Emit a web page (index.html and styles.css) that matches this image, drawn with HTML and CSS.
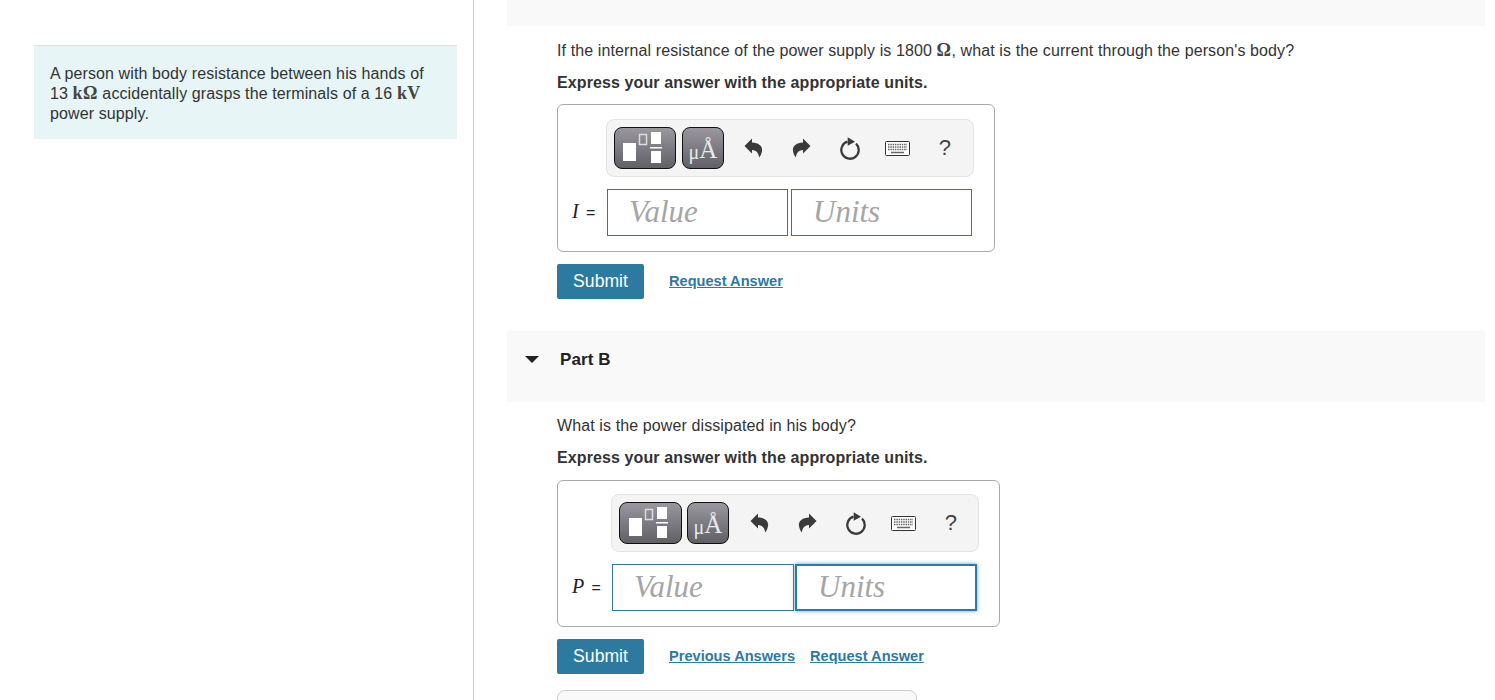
FILE: index.html
```html
<!DOCTYPE html>
<html lang="en">
<head>
    <meta charset="UTF-8">
    <title>Part B</title>
    <link rel="stylesheet" href="styles.css">
</head>
<body>
    <aside class="left-col">
        <div class="intro">
            A person with body resistance between his hands of<br>
            13 <span class="math">kΩ</span> accidentally grasps the terminals of a 16 <span class="math">kV</span><br>
            power supply.
        </div>
    </aside>

    <main class="right-col">
        <div class="part-band part-band-top"></div>
        <section class="part-body">
            <p class="question">If the internal resistance of the power supply is 1800 <span class="math">Ω</span>, what is the current through the person's body?</p>
            <p class="express">Express your answer with the appropriate units.</p>

            <div class="answer">
                <div class="toolbar">
                    <div class="tool-btn tool-btn-frac">
                        <svg width="60" height="40" viewBox="0 0 60 40"><rect x="8" y="15" width="13" height="18" fill="#fff"/><rect x="24.5" y="6.5" width="7" height="10" fill="none" stroke="#ddd" stroke-width="1.5"/><rect x="36" y="4" width="10" height="12" fill="#fff"/><rect x="35" y="19" width="12" height="1.5" fill="#fff"/><rect x="36" y="23" width="10" height="12" fill="#fff"/></svg>
                    </div>
                    <div class="tool-btn tool-btn-unit"><span class="mu">μ</span>Å</div>
                    <div class="tool-icon"><svg class="undo" width="20" height="22" viewBox="0 0 20 22"><path d="M1.5 9 L9 1.5 V5.5 C15 5.5 20 9 19 14 C18.7 16.5 17.5 19 16 20.5 C16 16 13 13 9 13 V16.5 Z" fill="#3a3a3a"/></svg></div>
                    <div class="tool-icon"><svg class="flip" width="20" height="22" viewBox="0 0 20 22"><path d="M1.5 9 L9 1.5 V5.5 C15 5.5 20 9 19 14 C18.7 16.5 17.5 19 16 20.5 C16 16 13 13 9 13 V16.5 Z" fill="#3a3a3a"/></svg></div>
                    <div class="tool-icon"><svg width="22" height="24" viewBox="0 0 22 24"><path d="M8.5 5.7 A8.7 8.7 0 1 0 17 7.7" fill="none" stroke="#3a3a3a" stroke-width="2.3"/><path d="M8.7 1.3 L16 5.7 L8.7 9.7 Z" fill="#3a3a3a"/></svg></div>
                    <div class="tool-icon"><svg class="keys" width="25" height="15" viewBox="0 0 25 15"><rect x="0.5" y="0.5" width="24" height="14" rx="1" fill="#fff" stroke="#333"/><path d="M3 3.5 H22 M3 6 H22 M3 8.5 H22" stroke="#666" stroke-width="1.5" stroke-dasharray="1.5 0.8"/><path d="M6 11.5 H19" stroke="#666" stroke-width="1.5"/></svg></div>
                    <div class="tool-icon tool-help">?</div>
                </div>
                <div class="answer-row">
                    <label class="var-label"><i>I</i> <span class="eq">=</span></label>
                    <input class="box-input" placeholder="Value">
                    <input class="box-input box-units" placeholder="Units">
                </div>
            </div>

            <div class="actions">
                <button class="submit">Submit</button>
                <a class="action-link" href="#">Request Answer</a>
            </div>
        </section>

        <div class="part-band">
            <span class="caret"></span>
            <h2 class="part-title">Part B</h2>
        </div>
        <section class="part-body part-body-b">
            <p class="question">What is the power dissipated in his body?</p>
            <p class="express">Express your answer with the appropriate units.</p>

            <div class="answer answer-b">
                <div class="toolbar">
                    <div class="tool-btn tool-btn-frac">
                        <svg width="60" height="40" viewBox="0 0 60 40"><rect x="8" y="15" width="13" height="18" fill="#fff"/><rect x="24.5" y="6.5" width="7" height="10" fill="none" stroke="#ddd" stroke-width="1.5"/><rect x="36" y="4" width="10" height="12" fill="#fff"/><rect x="35" y="19" width="12" height="1.5" fill="#fff"/><rect x="36" y="23" width="10" height="12" fill="#fff"/></svg>
                    </div>
                    <div class="tool-btn tool-btn-unit"><span class="mu">μ</span>Å</div>
                    <div class="tool-icon"><svg class="undo" width="20" height="22" viewBox="0 0 20 22"><path d="M1.5 9 L9 1.5 V5.5 C15 5.5 20 9 19 14 C18.7 16.5 17.5 19 16 20.5 C16 16 13 13 9 13 V16.5 Z" fill="#3a3a3a"/></svg></div>
                    <div class="tool-icon"><svg class="flip" width="20" height="22" viewBox="0 0 20 22"><path d="M1.5 9 L9 1.5 V5.5 C15 5.5 20 9 19 14 C18.7 16.5 17.5 19 16 20.5 C16 16 13 13 9 13 V16.5 Z" fill="#3a3a3a"/></svg></div>
                    <div class="tool-icon"><svg width="22" height="24" viewBox="0 0 22 24"><path d="M8.5 5.7 A8.7 8.7 0 1 0 17 7.7" fill="none" stroke="#3a3a3a" stroke-width="2.3"/><path d="M8.7 1.3 L16 5.7 L8.7 9.7 Z" fill="#3a3a3a"/></svg></div>
                    <div class="tool-icon"><svg class="keys" width="25" height="15" viewBox="0 0 25 15"><rect x="0.5" y="0.5" width="24" height="14" rx="1" fill="#fff" stroke="#333"/><path d="M3 3.5 H22 M3 6 H22 M3 8.5 H22" stroke="#666" stroke-width="1.5" stroke-dasharray="1.5 0.8"/><path d="M6 11.5 H19" stroke="#666" stroke-width="1.5"/></svg></div>
                    <div class="tool-icon tool-help">?</div>
                </div>
                <div class="answer-row">
                    <label class="var-label"><i>P</i> <span class="eq">=</span></label>
                    <input class="box-input" placeholder="Value">
                    <input class="box-input box-units box-focus" placeholder="Units">
                </div>
            </div>

            <div class="actions">
                <button class="submit">Submit</button>
                <a class="action-link" href="#">Previous Answers</a>
                <a class="action-link" href="#">Request Answer</a>
            </div>

            <div class="next-box"></div>
        </section>
    </main>
</body>
</html>
```

FILE: styles.css
```css
html, body {
    height: 700px;
    overflow: hidden;
}

body {
    display: flex;
    margin: 0;
    background: #fff;
    color: #333;
    font-family: 'Liberation Sans', Arial, sans-serif;
    font-size: 16px;
    line-height: 20px;
    letter-spacing: 0.11px;
}

/* left column */
.left-col {
    box-sizing: border-box;
    width: 474px;
    height: 700px;
    padding: 45px 16px 0 34px;
    border-right: 1px solid #ccc;
}

.intro {
    box-sizing: border-box;
    height: 94px;
    padding: 18px 16px 0;
    background: #e7f5f7;
    border-top: 1px solid #e0e2e8;
}

.math {
    color: #444;
    font-family: 'Liberation Serif', serif;
    font-size: 18px;
    font-weight: bold;
    line-height: 0;
    letter-spacing: 0.4px;
}

/* right column */
.right-col {
    width: 978px;
    margin-left: 33px;
}

.part-band {
    display: flex;
    align-items: flex-start;
    height: 71px;
    padding: 19px 0 0 18px;
    box-sizing: border-box;
    background: #f9f9f9;
}

.part-band-top {
    height: 26px;
    padding: 0;
}

.caret {
    width: 0;
    height: 0;
    margin-top: 6px;
    border-left: 7px solid transparent;
    border-right: 7px solid transparent;
    border-top: 7px solid #222;
}

.part-title {
    margin: 0 0 0 21px;
    font-size: 17px;
    line-height: 20px;
    color: #222;
}

.part-body {
    padding: 15px 0 32px 50px;
}

.part-body-b {
    padding-top: 14px;
    padding-bottom: 0;
}

.question {
    margin: 0 0 12px;
}

.express {
    margin: 0 0 11px;
    font-weight: bold;
}

.part-body-b .express {
    margin-bottom: 12px;
}

/* answer box */
.answer {
    box-sizing: border-box;
    width: 438px;
    height: 148px;
    padding: 14px 22px 0 14px;
    border: 1px solid #aaa;
    border-radius: 6px;
}

.answer-b {
    width: 443px;
    height: 147px;
    padding-top: 13px;
}

.toolbar {
    display: flex;
    align-items: center;
    box-sizing: border-box;
    width: 368px;
    height: 58px;
    margin-left: 34px;
    padding-left: 7px;
    gap: 6px;
    background: #f4f4f4;
    border: 1px solid #e3e3e3;
    border-radius: 8px;
}

.answer-b .toolbar {
    margin-left: 39px;
    gap: 5px;
}

.tool-btn {
    display: flex;
    align-items: center;
    justify-content: center;
    box-sizing: border-box;
    height: 42px;
    border: 1px solid #111;
    border-radius: 8px;
    background: linear-gradient(#9a979f, #606066);
}

.tool-btn-frac {
    width: 62px;
}

.answer-b .tool-btn-frac {
    width: 63px;
}

.tool-btn-unit {
    width: 42px;
    padding-top: 4px;
    color: #e9e9e9;
    font-family: 'Liberation Serif', serif;
    font-size: 25px;
}

.answer-b .tool-btn-unit {
    margin-right: 2px;
}

.mu {
    font-size: 20px;
    margin-top: 3px;
}

.tool-icon {
    display: flex;
    align-items: center;
    justify-content: center;
    width: 48px;
    margin-right: -6px;
    flex: none;
}

.answer-b .tool-icon {
    margin-right: -5px;
}

.undo {
    margin-right: 2px;
}

.flip {
    transform: scaleX(-1);
}

.keys {
    margin-right: 2px;
}

.tool-help {
    width: 46px;
    padding-right: 2px;
    font-size: 22px;
    color: #444;
}

.answer-row {
    display: flex;
    align-items: center;
    margin-top: 12px;
}

.var-label {
    width: 35px;
    margin-bottom: 2px;
    color: #222;
    font-family: 'Liberation Serif', serif;
    font-size: 20px;
    white-space: nowrap;
}

.answer-b .var-label {
    width: 40px;
}

.eq {
    margin-left: 2px;
    font-family: 'Liberation Sans', Arial, sans-serif;
    font-size: 16px;
}

.box-input {
    box-sizing: border-box;
    width: 181px;
    height: 47px;
    padding: 0 0 2px 21px;
    border: 1px solid #33769b;
    border-radius: 0;
    background: #fff;
    font-family: 'Liberation Serif', serif;
    font-style: italic;
    font-size: 31px;
    outline: none;
}

.box-input::placeholder {
    color: #a5a5a5;
    opacity: 1;
}

.box-units {
    margin-left: 3px;
}

.answer-b .box-input {
    width: 182px;
}

.answer-b .box-units {
    margin-left: 1px;
}

.box-focus {
    border: 2px solid #2f7aa1;
    box-shadow: 0 0 4px #5aa0c8;
}

/* submit row */
.actions {
    display: flex;
    align-items: center;
    margin-top: 12px;
}

.submit {
    box-sizing: border-box;
    width: 87px;
    height: 35px;
    margin-right: 10px;
    padding: 0;
    border: none;
    border-radius: 2px;
    background: #2d7aa1;
    color: #fff;
    font-family: 'Liberation Sans', Arial, sans-serif;
    font-size: 17.6px;
}

.action-link {
    margin-left: 15px;
    margin-bottom: 1px;
    color: #2d7aa1;
    font-size: 14.6px;
    font-weight: bold;
    letter-spacing: 0;
}

.next-box {
    box-sizing: border-box;
    width: 360px;
    height: 40px;
    margin-top: 16px;
    background: #f9f9f9;
    border: 1px solid #ccc;
    border-radius: 8px;
}
```
